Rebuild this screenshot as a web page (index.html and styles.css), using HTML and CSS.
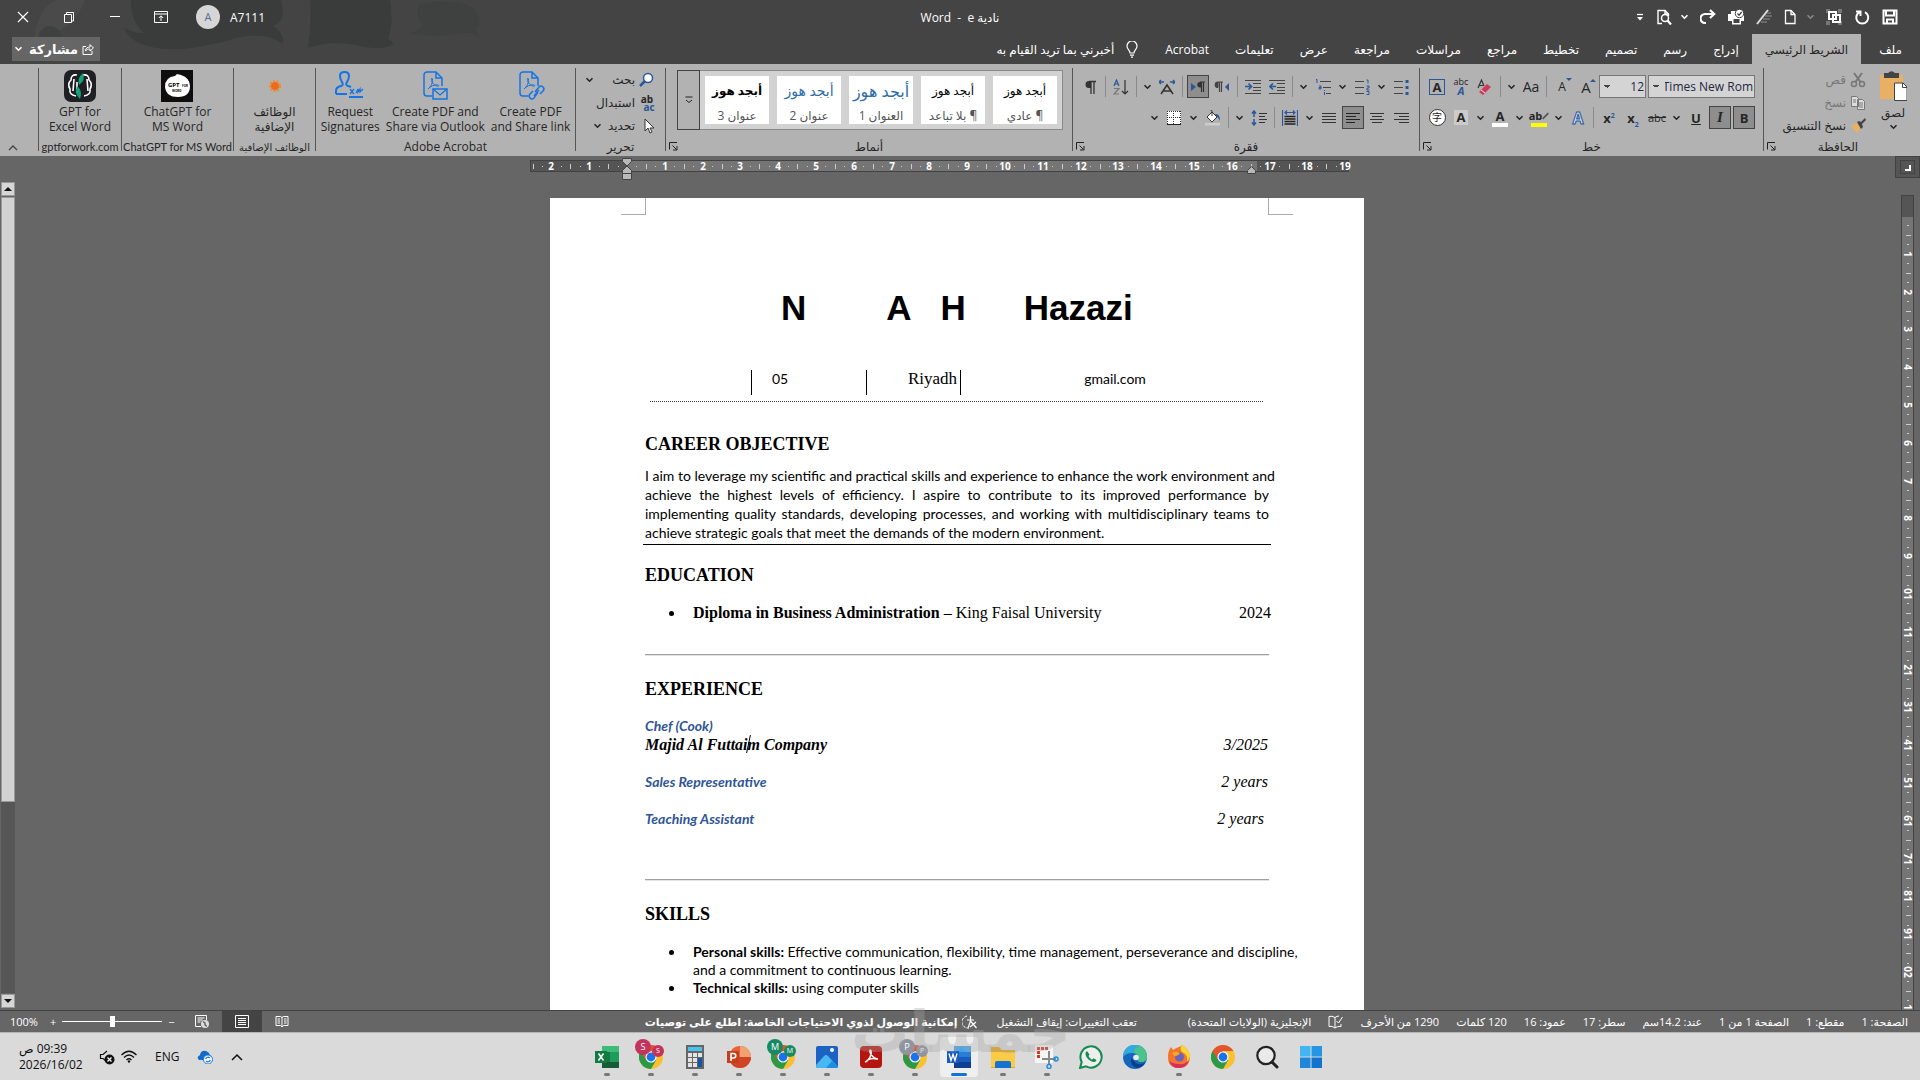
FILE: index.html
```
<!DOCTYPE html>
<html lang="ar" dir="rtl">
<head>
    <meta charset="UTF-8">
    <meta name="viewport" content="width=device-width, initial-scale=1.0">
    <title>نادية e - Word</title>
    <link rel="stylesheet" href="styles.css">
</head>
<body>
    <svg class="defs" aria-hidden="true">
        <symbol id="chev" viewBox="0 0 8 6"><path d="M1 1.2 4 4.2 7 1.2" fill="none" stroke="currentColor" stroke-width="1.6"/></symbol>
        <symbol id="launch" viewBox="0 0 9 9"><path d="M.5 7.500V.5H8M3.500 3.500 7.500 7.500M8 4v4H4" fill="none" stroke="#222"/></symbol>
        <symbol id="chrome" viewBox="0 0 24 24">
            <circle cx="12" cy="12" r="12" fill="#fbc02d"/>
            <path d="M12 12 1.600 6A12 12 0 0 0 12 24l5.200-9z" fill="#2a9a48"/>
            <path d="M1.600 6A12 12 0 0 1 22.400 6H12L6.800 15z" fill="#e2552f"/>
            <circle cx="12" cy="12" r="5.500" fill="#fff"/><circle cx="12" cy="12" r="4.400" fill="#1a73e8"/>
        </symbol>
        <symbol id="pdf" viewBox="0 0 24 28">
            <path d="M10 25H5a3 3 0 0 1-3-3V4a3 3 0 0 1 3-3h9l6 6v8M14 1v6h6" fill="none" stroke="#1473e6" stroke-width="1.500"/>
            <path d="M6 18c3-2 5-7 4.500-10-.3-1-1.300-1-1.200.3C9.600 12 13 15 16 15.200c1 0 1-1.200-.3-1.300C12 13.700 8.500 15 6 18z" fill="none" stroke="#1473e6"/>
        </symbol>
    </svg>

    <header class="top">
        <svg class="doodle" viewBox="0 0 520 64" aria-hidden="true">
            <path d="M35 30Q45 0 60 0h25q-10 30-50 40z" fill="#4a4a4a"/>
            <ellipse cx="50" cy="36" rx="11" ry="10" fill="#3f4040"/>
            <path d="M131 0h150q6 22-8 26 12 8 10 18-20-14-50-5-34 10-60 10-40 0-49-21 12 6 20 5-14-12-13-33zM310 0h80q4 24-2 38 4 4 6 6-8 6-30 3-30-8-56 1 4-24 2-48z" fill="#3a3c3c"/>
            <path d="M420 4q30-8 54 4 10 16 2 20l4 10q-8-6-18-5-26 6-52 0 10-2 12-8-8-12-2-21z" fill="#3f4040"/>
        </svg>
        <div class="titlebar">
            <div class="quick">
                <button class="qbtn" aria-label="حفظ"><svg viewBox="0 0 16 16"><path d="M1.500 1.500h13v13h-13zM4 1.500v5h8v-5M5 14.500v-4h6v4" fill="none" stroke="#fff" stroke-width="2"/></svg></button>
                <button class="qbtn" aria-label="تكرار"><svg viewBox="0 0 16 16"><path d="M5.500 3.200A6 6 0 1 0 11 3.200M2 2.500h4.500V7" fill="none" stroke="#fff" stroke-width="2"/></svg></button>
                <button class="qbtn" aria-label="تجميع"><svg viewBox="0 0 16 16"><path d="M0 0h4v4H0zM12 0h4v4h-4zM0 12h4v4H0zM12 12h4v4h-4z" fill="#777"/><path d="M3 3h7v7H3zM7 6h7v7H7z" fill="none" stroke="#fff" stroke-width="2"/></svg></button>
                <svg class="chev dim"><use href="#chev"/></svg>
                <button class="qbtn" aria-label="جديد"><svg viewBox="0 0 16 16"><path d="M3.500 1.500H9l4 4v9H3.500zM9 1.500v4h4" fill="none" stroke="#fff" stroke-width="1.300"/></svg></button>
                <button class="qbtn wide" aria-label="قلم"><svg viewBox="0 0 16 16"><path d="M1 15 12 1" stroke="#ddd" stroke-width="2"/><path d="M5 13h6M7 10h7M9 7h7M11 4h4" stroke="#777" stroke-width="1.500"/></svg></button>
                <button class="qbtn wide" aria-label="طباعة"><svg viewBox="0 0 16 16"><path d="M0 5h3V2h5v3h8v7h-3v3.500H4V12H0z" fill="#fff"/><path d="M5.500 10h6v4h-6z" fill="#444"/><circle cx="11.500" cy="4.500" r="4.200" fill="#fff" stroke="#444"/><path d="m9.500 4.500 1.500 1.700 2.700-3.200" fill="none" stroke="#444" stroke-width="1.300"/></svg></button>
                <button class="qbtn wide" aria-label="إعادة"><svg viewBox="0 0 16 16"><path d="M6 14H5A4.500 4.500 0 0 1 5 5h9M10 1l4.200 4L10 9" fill="none" stroke="#fff" stroke-width="2.200"/></svg></button>
                <svg class="chev"><use href="#chev"/></svg>
                <button class="qbtn" aria-label="معاينة"><svg viewBox="0 0 16 16"><path d="M6 14.500H2v-13h7l3.500 3.500v2M9 1.500v3.500h3" fill="none" stroke="#fff" stroke-width="1.400"/><circle cx="9" cy="9" r="3.500" fill="#444" stroke="#fff" stroke-width="1.500"/><path d="m11.500 11.500 3.500 4" stroke="#fff" stroke-width="2.200"/></svg></button>
                <button class="qbtn" aria-label="تخصيص"><svg viewBox="0 0 16 16"><path d="M5 5.500h6" stroke="#fff" stroke-width="1.300"/><path d="M5 8h6l-3 3.500z" fill="#fff"/></svg></button>
            </div>
            <div class="doc-title"><bdi>نادية</bdi> <bdi>e</bdi> &nbsp;-&nbsp; <bdi>Word</bdi></div>
            <div class="win">
                <span class="user"><span>A7111</span><span class="avatar">A</span></span>
                <button class="wbtn" aria-label="خيارات عرض الشريط"><svg viewBox="0 0 14 12"><path d="M.500.500h13v11H.500zM.500 3h13M7 10V5M4.800 7 7 4.800 9.200 7" fill="none" stroke="#fff"/></svg></button>
                <button class="wbtn" aria-label="تصغير"><svg viewBox="0 0 14 12"><path d="M2 5.500h10" stroke="#fff"/></svg></button>
                <button class="wbtn" aria-label="استعادة"><svg viewBox="0 0 14 12"><path d="M2.500 3.500h7v8h-7zM4.500 3V1.500h7V10H10" fill="none" stroke="#fff"/></svg></button>
                <button class="wbtn" aria-label="إغلاق"><svg viewBox="0 0 14 12"><path d="m2 1 10 10M12 1 2 11" stroke="#fff" stroke-width="1.200"/></svg></button>
            </div>
        </div>
        <nav class="tabs">
            <button class="tab file">ملف</button>
            <button class="tab active">الشريط الرئيسي</button>
            <button class="tab">إدراج</button>
            <button class="tab">رسم</button>
            <button class="tab">تصميم</button>
            <button class="tab">تخطيط</button>
            <button class="tab">مراجع</button>
            <button class="tab">مراسلات</button>
            <button class="tab">مراجعة</button>
            <button class="tab">عرض</button>
            <button class="tab">تعليمات</button>
            <button class="tab">Acrobat</button>
            <button class="tell"><svg viewBox="0 0 12 17"><path d="M4 12c0-3-3-3.500-3-7a5 5 0 0 1 10 0c0 3.500-3 4-3 7zM4 14.200h4M5 16.200h2" fill="none" stroke="#fff" stroke-width="1.200"/></svg>أخبرني بما تريد القيام به</button>
            <button class="share"><svg class="share-ico" viewBox="0 0 12 12"><path d="M4 3.500H1v8h9V8M3.500 8c0-3 2-4 4.500-4V1.500L11.500 5 8 8V6C6 6 4.500 6.500 3.500 8z" fill="none" stroke="#fff"/></svg>مشاركة<svg class="chev"><use href="#chev"/></svg></button>
        </nav>
    </header>

    <section class="ribbon">
        <div class="group clip">
            <div class="body">
                <button class="paste"><svg viewBox="0 0 28 30"><path d="M1 4h23v24H1z" fill="#e8b063"/><path d="M5 2h4q3.500-3.500 7 0h4v5H5z" fill="#444"/><path d="M15.500 12H24l4 4v13.500H15.500z" fill="#fff" stroke="#444"/><path d="M23.500 12v4.500H28" fill="none" stroke="#444"/></svg>لصق<svg class="chev"><use href="#chev"/></svg></button>
                <div class="stack">
                    <button class="mini off"><svg viewBox="0 0 16 16"><path d="M4 1l6.500 9M12 1 5.500 10" stroke="#777" stroke-width="2"/><circle cx="4" cy="12" r="2.500" fill="none" stroke="#777" stroke-width="1.500"/><circle cx="12" cy="12" r="2.500" fill="none" stroke="#777" stroke-width="1.500"/></svg>قص</button>
                    <button class="mini off"><svg viewBox="0 0 16 16"><path d="M1.500 1.500h5l2 2v8h-7zM7.500 4.500h5l2 2v8h-7z" fill="#ddd" stroke="#777"/><path d="M3 5h3M3 7h3M9 8h4M9 10h4M9 12h4" stroke="#777"/></svg>نسخ</button>
                    <button class="mini"><svg viewBox="0 0 16 16"><path d="m1 8 6-3 4 5-4 5z" fill="#e8b063"/><path d="m7 4 2-1 2 1 4-4 1 2-4 4 1 3-2 2z" fill="#444"/></svg>نسخ التنسيق</button>
                </div>
            </div>
            <div class="label">الحافظة</div><svg class="launch"><use href="#launch"/></svg>
        </div>

        <div class="group font">
            <div class="rows">
                <div class="row">
                    <select class="combo face" aria-label="الخط"><option>Times New Rom</option></select>
                    <select class="combo size" aria-label="حجم الخط"><option>12</option></select>
                    <button class="tool"><span class="g16">A</span><i class="tri up"></i></button>
                    <button class="tool"><span class="g13">A</span><i class="tri down"></i></button>
                    <i class="sep"></i>
                    <button class="tool"><span class="g15">Aa</span></button>
                    <svg class="chev"><use href="#chev"/></svg>
                    <i class="sep"></i>
                    <button class="tool" aria-label="مسح"><svg viewBox="0 0 16 16"><path d="M1 9 4.500 1 7 7M2.500 6.500h3.500" fill="none" stroke="#333" stroke-width="1.200"/><path d="m2 13 8-8 4 3-8 8z" fill="#cf3a5c"/><path d="m4 11 4 3" stroke="#fff" stroke-width=".8"/></svg></button>
                    <button class="tool abca"><span>abc</span><b>A</b></button>
                    <button class="tool"><span class="boxed">A</span></button>
                </div>
                <div class="row">
                    <button class="tool on"><b>B</b></button>
                    <button class="tool on"><b class="serif-i">I</b></button>
                    <button class="tool"><b class="und">U</b></button>
                    <svg class="chev"><use href="#chev"/></svg>
                    <button class="tool"><s class="g12">abc</s></button>
                    <button class="tool"><b dir="ltr">x<sub>2</sub></b></button>
                    <button class="tool"><b dir="ltr">x<sup>2</sup></b></button>
                    <i class="sep"></i>
                    <button class="tool"><span class="glow">A</span></button>
                    <svg class="chev"><use href="#chev"/></svg>
                    <button class="tool bar yellow" dir="ltr"><b class="g12">ab</b><svg class="pen" viewBox="0 0 10 10"><path d="M1 9 9 1" stroke="#555" stroke-width="2.500"/></svg></button>
                    <svg class="chev"><use href="#chev"/></svg>
                    <button class="tool bar white"><b>A</b></button>
                    <svg class="chev"><use href="#chev"/></svg>
                    <button class="tool"><b class="shade">A</b></button>
                    <button class="tool"><span class="round">字</span></button>
                </div>
            </div>
            <div class="label">خط</div><svg class="launch"><use href="#launch"/></svg>
        </div>

        <div class="group para">
            <div class="rows">
                <div class="row">
                    <button class="tool" aria-label="تعداد نقطي"><svg viewBox="0 0 16 16"><path d="M1 2.500h9M1 8.500h9M1 14.500h9" stroke="#444"/><path d="M12.500 1h3v3h-3zM12.500 7h3v3h-3zM12.500 13h3v3h-3z" fill="#2b579a"/></svg></button>
                    <svg class="chev"><use href="#chev"/></svg>
                    <button class="tool" aria-label="تعداد رقمي"><svg viewBox="0 0 16 16"><path d="M1 2.500h9M1 8.500h9M1 14.500h9" stroke="#444"/><path d="M12.500 1H14v3.500M12.500 7H15v2h-2v2h2.500M12.500 12.500H15v3h-2.500" fill="none" stroke="#2b579a"/></svg></button>
                    <svg class="chev"><use href="#chev"/></svg>
                    <button class="tool" aria-label="قائمة متعددة"><svg viewBox="0 0 16 16"><path d="M5 2.500h11M8 8.500h8M11 14.500h5" stroke="#444"/><path d="M1 .5h1V4M4 7h2v3H4V8.500h2M9.500 11v1M9.500 13v3" fill="none" stroke="#2b579a"/></svg></button>
                    <svg class="chev"><use href="#chev"/></svg>
                    <i class="sep"></i>
                    <button class="tool" aria-label="إنقاص المسافة"><svg viewBox="0 0 16 16"><path d="M0 1.500h16M8 4.500h8M8 8.500h8M8 11.500h8M0 14.500h16" stroke="#444"/><path d="M7 7.500H1M4 4.500l-3 3 3 3" fill="none" stroke="#2b579a" stroke-width="1.600"/></svg></button>
                    <button class="tool" aria-label="زيادة المسافة"><svg viewBox="0 0 16 16"><path d="M0 1.500h16M8 4.500h8M8 8.500h8M8 11.500h8M0 14.500h16" stroke="#444"/><path d="M0 7.500h6M3.500 4.500l3 3-3 3" fill="none" stroke="#2b579a" stroke-width="1.600"/></svg></button>
                    <i class="sep"></i>
                    <button class="tool" aria-label="من اليمين إلى اليسار"><svg viewBox="0 0 16 16"><path d="M9 3H4a2.500 2.500 0 0 0 0 5.500M5.500 3v10M7.500 3v10" fill="none" stroke="#444" stroke-width="1.200"/><path d="M4.500 3v5.500H4a2.700 2.700 0 0 1 0-5.500z" fill="#444"/><path d="M15 4v8l-4-4z" fill="#2b579a"/></svg></button>
                    <button class="tool on" aria-label="من اليسار إلى اليمين"><svg viewBox="0 0 16 16"><path d="M15 3h-5M11.500 3v10M13.500 3v10" fill="none" stroke="#333" stroke-width="1.200"/><path d="M11.500 3v5.500H10A2.700 2.700 0 0 1 10 3z" fill="#333"/><path d="M1 4v8l5-4z" fill="#2b579a"/></svg></button>
                    <i class="sep"></i>
                    <button class="tool" aria-label="تخطيط آسيوي"><svg viewBox="0 0 16 16"><path d="m2 15 6-9 6 9M4.500 12h7" fill="none" stroke="#333" stroke-width="1.600"/><path d="M0 3h5M2 1 0 3l2 2M11 3h5M14 1l2 2-2 2" fill="none" stroke="#2b579a" stroke-width="1.300"/></svg></button>
                    <svg class="chev"><use href="#chev"/></svg>
                    <i class="sep"></i>
                    <button class="tool" aria-label="فرز"><svg viewBox="0 0 16 16"><path d="m1 7 2.500-6L6 7M2 5h3" fill="none" stroke="#2b579a" stroke-width="1.200"/><path d="M1 9.500h5L1 15h5" fill="none" stroke="#777" stroke-width="1.200"/><path d="M12 1v14M9 12l3 3 3-3" fill="none" stroke="#333" stroke-width="1.200"/></svg></button>
                    <i class="sep"></i>
                    <button class="tool" aria-label="إظهار العلامات"><svg viewBox="0 0 16 16"><path d="M14 2.500H7M9 2v13M12 2v13" stroke="#333" stroke-width="1.300" fill="none"/><path d="M9 2v7H7a3.500 3.500 0 0 1 0-7z" fill="#333"/></svg></button>
                </div>
                <div class="row">
                    <button class="tool" aria-label="محاذاة لليمين"><svg viewBox="0 0 16 16"><path d="M1 3.500h15M6 6.500h10M1 9.500h15M6 12.500h10" stroke="#333"/></svg></button>
                    <button class="tool" aria-label="توسيط"><svg viewBox="0 0 16 16"><path d="M1 3.500h14M3 6.500h10M1 9.500h14M3 12.500h10" stroke="#333"/></svg></button>
                    <button class="tool on" aria-label="محاذاة لليسار"><svg viewBox="0 0 16 16"><path d="M1 3.500h14M1 6.500h10M1 9.500h14M1 12.500h9" stroke="#222"/></svg></button>
                    <button class="tool" aria-label="ضبط"><svg viewBox="0 0 16 16"><path d="M1 3.500h14M1 6.500h14M1 9.500h14M1 12.500h14" stroke="#333"/></svg></button>
                    <svg class="chev"><use href="#chev"/></svg>
                    <button class="tool" aria-label="توزيع"><svg viewBox="0 0 16 16"><path d="M.5 0v16M15.500 0v16M3 2.500h10M5 .5l-2 2 2 2M11 .5l2 2-2 2" fill="none" stroke="#2b579a" stroke-width="1.200"/><path d="M2.500 6.500h11M2.500 9h11M2.500 11.500h11M2.500 14h11" stroke="#222" stroke-width="1.300"/></svg></button>
                    <i class="sep"></i>
                    <button class="tool" aria-label="تباعد الأسطر"><svg viewBox="0 0 16 16"><path d="M8 3.500h8M8 6.500h6M8 9.500h8M8 12.500h6" stroke="#333"/><path d="M3 1v6M3 9v6M1 3.500 3 1l2 2.500M1 12.500 3 15l2-2.500" fill="none" stroke="#2b579a" stroke-width="1.500"/></svg></button>
                    <svg class="chev"><use href="#chev"/></svg>
                    <i class="sep"></i>
                    <button class="tool" aria-label="تظليل"><svg viewBox="0 0 16 16"><path d="m2 7 5-5 5 5-5 5z" fill="#fff" stroke="#333"/><path d="M7 6V1.500Q7 0 5.500 0" fill="none" stroke="#333"/><path d="M10 4q5-1 5 7-2-4-3-4z" fill="#2b579a"/><path d="M0 13h15v2.500H0z" fill="#ccc"/></svg></button>
                    <svg class="chev"><use href="#chev"/></svg>
                    <button class="tool" aria-label="حدود"><svg viewBox="0 0 16 16"><path d="M1 1h14v14H1z" fill="#fff"/><path d="M1 1.500h14M1 7.500h14M1.500 1v14M7.500 1v14M14.500 1v14" stroke="#333" stroke-dasharray="1 1"/><path d="M1 14.500h14" stroke="#222"/></svg></button>
                    <svg class="chev"><use href="#chev"/></svg>
                </div>
            </div>
            <div class="label">فقرة</div><svg class="launch"><use href="#launch"/></svg>
        </div>

        <div class="group styles">
            <div class="gallery">
                <button class="style"><span class="sample">أبجد هوز</span><span>¶ عادي</span></button>
                <button class="style"><span class="sample">أبجد هوز</span><span>¶ بلا تباعد</span></button>
                <button class="style"><span class="sample big">أبجد هوز</span><span>العنوان 1</span></button>
                <button class="style"><span class="sample blue">أبجد هوز</span><span>عنوان 2</span></button>
                <button class="style"><span class="sample bold">أبجد هوز</span><span>عنوان 3</span></button>
                <button class="more" aria-label="المزيد"><svg viewBox="0 0 8 8"><path d="M.500 1h7M1 4l3 2.500L7 4" fill="none" stroke="#222"/></svg></button>
            </div>
            <div class="label">أنماط</div><svg class="launch"><use href="#launch"/></svg>
        </div>

        <div class="group edit">
            <div class="stack">
                <button class="mini"><svg viewBox="0 0 16 16"><circle cx="9" cy="6" r="4.500" fill="#fff" stroke="#2b579a" stroke-width="1.500"/><path d="m6 9-5 5" stroke="#2b579a" stroke-width="2.500"/></svg>بحث<svg class="chev far"><use href="#chev"/></svg></button>
                <button class="mini"><span class="abac" dir="ltr"><span>ab</span><span>ac</span></span>استبدال</button>
                <button class="mini"><svg viewBox="0 0 16 16"><path d="M6 1v12l3-3 2 5 2-1-2-4h4z" fill="#fff" stroke="#333"/></svg>تحديد<svg class="chev"><use href="#chev"/></svg></button>
            </div>
            <div class="label">تحرير</div>
        </div>

        <div class="group adobe" dir="ltr">
            <div class="body">
                <button class="large"><svg viewBox="0 0 32 32"><path d="M2 24v-3q0-4 5-5 3-1 1-4-2-3-2-6 0-4 4.500-4T15 6q0 3-2 6-2 3 1 4 2 .5 3 1M2 24h11M15 27h14" fill="none" stroke="#1473e6" stroke-width="2"/><path d="m16 19 4 5M20 19l-4 5M22 23l2-4v3l2-3v3l3-3" fill="none" stroke="#1473e6" stroke-width="1.300"/></svg>Request<br>Signatures</button>
                <button class="large"><svg viewBox="0 0 32 32"><use href="#pdf" x="3" y="1" width="24" height="28"/><path d="M14 19h14v10H14z" fill="#b2b2b2" stroke="#1473e6" stroke-width="1.500"/><path d="m14 19 7 6 7-6" fill="none" stroke="#1473e6" stroke-width="1.300"/></svg>Create PDF and<br>Share via Outlook</button>
                <button class="large"><svg viewBox="0 0 32 32"><use href="#pdf" x="3" y="1" width="24" height="28"/><path d="m20 22 4-5q2-2 4 0t0 4l-3 3M23 22l-4 6q-2 2-4 0t0-4l3-3M19 26l5-6" fill="none" stroke="#1473e6" stroke-width="1.500"/></svg>Create PDF<br>and Share link</button>
            </div>
            <div class="label">Adobe Acrobat</div>
        </div>

        <div class="group addin">
            <div class="body"><button class="large"><svg viewBox="0 0 32 32"><circle cx="16" cy="16" r="4" fill="#ee6a1f"/><circle cx="16" cy="16" r="5" fill="none" stroke="#f08a22" stroke-width="2" stroke-dasharray="2 1.500"/></svg>الوظائف<br>الإضافية</button></div>
            <div class="label">الوظائف الإضافية</div>
        </div>

        <div class="group chatgpt" dir="ltr">
            <div class="body"><button class="large"><svg viewBox="0 0 32 32"><path d="M0 0h32v32H0z" fill="#0e0e0e"/><path d="M16 4l4 1q9 3 9 11 0 11-12 11T4 17Q4 7 14 6z" fill="#fff"/><text x="7" y="17" class="logo-text">GPT</text><text x="21" y="17" class="logo-tiny">FOR</text><text x="11" y="22" class="logo-tiny">WORD</text></svg>ChatGPT for<br>MS Word</button></div>
            <div class="label">ChatGPT for MS Word</div>
        </div>

        <div class="group gptfor" dir="ltr">
            <div class="body"><button class="large"><svg viewBox="0 0 32 32"><rect width="32" height="32" rx="7" fill="#1f2024"/><path d="M13 5Q7 4 7 10q-4 4-1 9-1 6 6 7M19 5q6-1 6 5 4 4 1 9 1 6-6 7M10 9l-1 12M23 9l1 12M13 12v11" fill="none" stroke="#fff" stroke-width="1.600"/><path d="M19 3q3 7-4 12-2-7 4-12zM13 16q6 4 3 13-6-5-3-13z" fill="#12a37a"/></svg>GPT for<br>Excel Word</button></div>
            <div class="label">gptforwork.com</div>
        </div>
        <button class="collapse" aria-label="طي الشريط"><svg viewBox="0 0 10 6"><path d="m1 5 4-4 4 4" fill="none" stroke="#444" stroke-width="1.300"/></svg></button>
    </section>

    <main class="work" dir="ltr">
        <div class="scroll">
            <button aria-label="up"><svg viewBox="0 0 8 8"><path d="M0 6h8L4 2z" fill="#111"/></svg></button>
            <div class="track"><div class="thumb"></div></div>
            <button aria-label="down"><svg viewBox="0 0 8 8"><path d="M0 2h8L4 6z" fill="#111"/></svg></button>
        </div>

        <div class="canvas">
            <svg class="hruler" id="hruler" width="830" height="24"></svg>
            <article class="page">
                <div class="marks"><i></i><i></i></div>
                <h1><span>N</span><span>A</span><span>H</span><span>Hazazi</span></h1>
                <div class="contact">
                    <span class="c-blank"></span><span class="c-phone">05</span><span class="c-city">Riyadh</span><span class="c-mail">gmail.com</span>
                </div>
                <h2 class="first">CAREER OBJECTIVE</h2>
                <p class="objective">
                    <span>I aim to leverage my scientific and practical skills and experience to enhance the work environment and</span>
                    <span>achieve the highest levels of efficiency. I aspire to contribute to its improved performance by</span>
                    <span>implementing quality standards, developing processes, and working with multidisciplinary teams to</span>
                    <span>achieve strategic goals that meet the demands of the modern environment.</span>
                </p>
                <hr class="solid">
                <h2>EDUCATION</h2>
                <ul class="edu"><li><span><b>Diploma in Business Administration</b> – King Faisal University</span><span>2024</span></li></ul>
                <hr>
                <h2>EXPERIENCE</h2>
                <p class="job"><span class="role">Chef (Cook)</span></p>
                <p class="job second"><span class="firm">Majid Al Futtai<i class="caret"></i>m Company</span><span>3/2025</span></p>
                <p class="job"><span class="role">Sales Representative</span><span>2 years</span></p>
                <p class="job"><span class="role">Teaching Assistant</span><span class="last">2 years</span></p>
                <hr class="low">
                <h2>SKILLS</h2>
                <ul class="skills">
                    <li><b>Personal skills:</b> Effective communication, flexibility, time management, perseverance and discipline, and a commitment to continuous learning.</li>
                    <li><b>Technical skills:</b> using computer skills</li>
                </ul>
            </article>
        </div>

        <div class="side">
            <div class="corner"><span><i></i></span></div>
            <svg class="vruler" id="vruler" width="13" height="815"></svg>
        </div>
    </main>

    <footer class="status">
        <span>الصفحة: 1</span>
        <span>مقطع: 1</span>
        <span>الصفحة 1 من 1</span>
        <span>عند: 14.2سم</span>
        <span>سطر: 17</span>
        <span>عمود: 16</span>
        <span>120 كلمات</span>
        <span>1290 من الأحرف</span>
        <svg class="s-ico" viewBox="0 0 15 14"><path d="M7 2.500V13M7 2.500Q4 .5 1 1.500v10q3-1 6 1.500 2-2 6-1.500V9M7 2.500q2-1.500 4-1.500M8.500 6l2 2 4-6" fill="none" stroke="#fff"/></svg>
        <span>الإنجليزية (الولايات المتحدة)</span>
        <span class="track-ch">تعقب التغييرات: إيقاف التشغيل</span>
        <span class="access"><svg class="s-ico" viewBox="0 0 15 14"><path d="M5 1a6 6 0 0 0 2 12" fill="none" stroke="#fff" stroke-dasharray="3 1"/><path d="M5 5h7M8.500 1v5L6 13M8.500 6l6 7M14 7l-6 5" fill="none" stroke="#fff" stroke-width="1.200"/></svg>إمكانية الوصول لذوي الاحتياجات الخاصة: اطلع على توصيات</span>
        <span class="right-end">
            <span class="views">
                <button aria-label="وضع القراءة"><svg viewBox="0 0 14 13"><path d="M7 2v10M1 1.500h4.500L7 2.500l1.500-1H13v9H8.500L7 12l-1.500-1.500H1zM2.500 4H5M2.500 6H5M2.500 8H5M9 4h2.500M9 6h2.500M9 8h2.500" fill="none" stroke="#fff"/></svg></button>
                <button class="cur" aria-label="تخطيط الطباعة"><svg viewBox="0 0 14 13"><path d="M.5.5h13v12H.5zM3 3.500h8M3 5.500h8M3 7.500h8M3 9.500h8" fill="none" stroke="#fff"/></svg></button>
                <button aria-label="تخطيط ويب"><svg viewBox="0 0 14 13"><path d="M6 11.500H.500V.500h11V5M2.500 3h7M2.500 5h5M2.500 7h3" fill="none" stroke="#fff"/><circle cx="10" cy="9" r="4" fill="#ddd"/><path d="M8 7q2 0 2 2t2 2" stroke="#666" fill="none" stroke-width="1.500"/></svg></button>
            </span>
            <span class="zoom" dir="ltr"><label for="zoom">100%</label><span>+</span><input type="range" id="zoom" min="0" max="100" value="50"><span>−</span></span>
        </span>
    </footer>

    <footer class="taskbar" dir="ltr">
        <div class="tray">
            <div class="clock"><span dir="rtl">09:39 ص</span><span>2026/16/02</span></div>
            <svg class="t-snd" viewBox="0 0 16 16"><path d="M8 2 4 5.500H1.500v4H4L7 12" fill="none" stroke="#111" stroke-width="1.200"/><circle cx="10.500" cy="10.500" r="5" fill="#111"/><path d="m8.500 8.500 4 4M12.500 8.500l-4 4" stroke="#fff" stroke-width="1.200"/></svg>
            <svg class="t-wifi" viewBox="0 0 16 13"><path d="M.5 5Q8-2.500 15.500 5M3 7.500q5-5 10 0M5.500 10q2.500-2.500 5 0" fill="none" stroke="#111" stroke-width="1.300"/><circle cx="8" cy="11.500" r="1.200" fill="#111"/></svg>
            <span class="lang">ENG</span>
            <svg class="t-drive" viewBox="0 0 16 14"><path d="M2 10q-3-3 1-5 1-5 6-4 3 1 4 4 3 1 2 5z" fill="#1569c7"/><circle cx="11" cy="9.500" r="4.500" fill="#fff" stroke="#1473e6"/><path d="M8.800 9a2.300 2.300 0 0 1 4-1M13.200 10a2.300 2.300 0 0 1-4 1" fill="none" stroke="#1473e6" stroke-width="1.200"/></svg>
            <svg class="t-up" viewBox="0 0 12 8"><path d="m1 7 5-5 5 5" fill="none" stroke="#111" stroke-width="1.500"/></svg>
        </div>
        <div class="apps">
            <button class="app run" aria-label="Excel"><svg viewBox="0 0 24 24"><path d="M7 1h17v22H7z" fill="#1f9b5c"/><path d="M7 1h17v6H7z" fill="#3dbb77"/><path d="M7 17h17v6H7z" fill="#185c37"/><path d="M7 7h8v10H7z" fill="#137a42"/><rect y="6" width="12" height="12" fill="#107c41"/><path d="m3.500 8.500 5 7M8.500 8.500l-5 7" stroke="#fff" stroke-width="1.600"/></svg></button>
            <button class="app run" aria-label="Chrome S"><svg viewBox="0 0 24 24"><use href="#chrome"/></svg><span class="badge pink">S</span><span class="badge small pink">S</span></button>
            <button class="app run" aria-label="Calculator"><svg viewBox="0 0 24 24"><path d="M3 0h18v24H3z" fill="#666"/><path d="M5 2h14v4H5z" fill="#4cc2f1"/><path d="M5 8h4v4H5zM10 8h4v4h-4zM15 8h4v4h-4zM5 13h4v4H5zM10 13h4v4h-4zM5 18h4v4H5zM10 18h4v4h-4z" fill="#e4e4e4"/><path d="M15 13h4v9h-4z" fill="#1256a8"/></svg></button>
            <button class="app run" aria-label="PowerPoint"><svg viewBox="0 0 24 24"><circle cx="13" cy="12" r="11" fill="#e8613c"/><path d="M13 1a11 11 0 0 1 11 11H13z" fill="#f2a26f"/><path d="M2 12h22a11 11 0 0 1-22 0z" fill="#d04424"/><rect y="6" width="12" height="12" fill="#c43e1c"/><path d="M4 16V8.500h2.500a2 2 0 0 1 0 4.500H4" fill="none" stroke="#fff" stroke-width="1.600"/></svg></button>
            <button class="app run" aria-label="Chrome M"><svg viewBox="0 0 24 24"><use href="#chrome"/></svg><span class="badge green">M</span><span class="badge small green">M</span></button>
            <button class="app run" aria-label="Photos"><svg viewBox="0 0 24 24"><rect x="1" y="1" width="22" height="22" rx="2" fill="#1b62c4"/><path d="m1 20 8-9q2-2 4 0l10 11-1 1H3q-2 0-2-3z" fill="#48b8f0"/><path d="m11 23 6-7 6 6-1 1z" fill="#1d8fe0"/><circle cx="17" cy="5" r="2" fill="#fff"/></svg></button>
            <button class="app run" aria-label="Acrobat"><svg viewBox="0 0 24 24"><rect x="1" y="1" width="22" height="22" rx="4" fill="#b5150f"/><path d="M6 17c4-1 7-7 6-11-.4-1.500-1.500-1-1 1 1 4 5 7 8 7M6.500 17C9 14 14 13 18 14" fill="none" stroke="#fff" stroke-width="1.600"/></svg></button>
            <button class="app run" aria-label="Chrome P"><svg viewBox="0 0 24 24"><use href="#chrome"/></svg><span class="badge gray">P</span><span class="badge small gray">P</span></button>
            <button class="app run now" aria-label="Word"><svg viewBox="0 0 24 24"><path d="M7 1h17v22H7z" fill="#2b7cd3"/><path d="M7 1h17v6H7z" fill="#41a5ee"/><path d="M7 12h17v6H7z" fill="#185abd"/><path d="M7 17h17v6H7z" fill="#103f91"/><rect y="6" width="12" height="12" fill="#185abd"/><path d="m2 8.500 2 7 2-6 2 6 2-7" fill="none" stroke="#fff" stroke-width="1.400"/></svg></button>
            <button class="app run" aria-label="Explorer"><svg viewBox="0 0 24 24"><path d="M0 2h8l3 3h13v18H0z" fill="#e8a51c"/><path d="M0 7h24v15H0z" fill="#fccb45"/><path d="M4 23v-5q0-2 2-2h12q2 0 2 2v5z" fill="#1473d0"/></svg></button>
            <button class="app run" aria-label="Snipping Tool"><svg viewBox="0 0 24 24"><path d="M0 0h18v18H0z" fill="#f6f6f6"/><path d="M2 2h3v3H2zM6 2h3v3H6zM10 2h3v3h-3zM2 6h3v3H2zM2 10h3v3H2z" fill="#d8331d"/><path d="M7 14h14M14 6v14" stroke="#888" stroke-width="2"/><circle cx="21" cy="14" r="2" fill="none" stroke="#1e8fe0" stroke-width="1.500"/><circle cx="14" cy="21.500" r="2" fill="none" stroke="#1e8fe0" stroke-width="1.500"/></svg></button>
            <button class="app" aria-label="WhatsApp"><svg viewBox="0 0 24 24"><path d="m1 23 1.700-6A10.600 10.600 0 1 1 7 21.300z" fill="#eee" stroke="#128c4e" stroke-width="2"/><path d="M8 6q-2 1-1.500 3.500Q8 15 14 17q3 .5 3.500-2l-3-1.700-1.500 1.400Q10.500 13.500 9.500 11l1-1.500z" fill="#128c4e"/></svg></button>
            <button class="app" aria-label="Edge"><svg viewBox="0 0 24 24"><circle cx="12" cy="12" r="12" fill="#1368bd"/><path d="M0 12A12 12 0 0 1 24 11q0 6-6 6-4 0-3-3 1-6-6-6-6 0-9 4z" fill="#35a8dc"/><path d="M12 0a12 12 0 0 1 12 11q0 6-6 6-4 0-3-3 1-5-4-6 0-5 5-6z" fill="#4cc38a"/><path d="M8 13q-1 8 6 10 6-1 8-5-8 3-11-2z" fill="#0c3f8a"/><circle cx="13" cy="12.500" r="2.800" fill="#e6eef5"/></svg></button>
            <button class="app run" aria-label="Firefox"><svg viewBox="0 0 24 24"><path d="M12 2q3-1 3-2 7 4 8 11 0 12-11 12T1 12Q1 6 4 2l2 3q3-2 6-3z" fill="#f4742b"/><path d="M15 0q7 4 8 11-1 4-3 6 1-8-5-10-3-3 0-7z" fill="#fdd835"/><path d="M2 16q3 8 11 7 7-1 9-8-4 5-10 4-6 0-10-3z" fill="#d42e5f"/><circle cx="12.500" cy="12" r="4.500" fill="#6a64c0"/><path d="M5 8q5-3 8 1l-4 2q-2 1-4-3z" fill="#f9a825"/></svg></button>
            <button class="app" aria-label="Chrome"><svg viewBox="0 0 24 24"><use href="#chrome"/></svg></button>
            <button class="app" aria-label="Search"><svg viewBox="0 0 24 24"><circle cx="11" cy="10.500" r="8.700" fill="#eaeaea" stroke="#222" stroke-width="2.200"/><path d="m17 17 5 5" stroke="#222" stroke-width="3" stroke-linecap="round"/></svg></button>
            <button class="app" aria-label="Start"><svg viewBox="0 0 24 24"><path d="M1 1h10.500v10.500H1z" fill="#41b6f2"/><path d="M12.500 1H23v10.500H12.500z" fill="#2596e2"/><path d="M1 12.500h10.500V23H1z" fill="#1f86d8"/><path d="M12.500 12.500H23V23H12.500z" fill="#1273ce"/></svg></button>
        </div>
    </footer>
    <div class="watermark">خمسات</div>

    <script>
        const NS = 'http://www.w3.org/2000/svg';
        const UNIT = 37.8;

        function add(parent, name, attrs, text) {
            const el = document.createElementNS(NS, name);
            for (const key in attrs) el.setAttribute(key, attrs[key]);
            if (text) el.textContent = text;
            parent.appendChild(el);
        }

        // horizontal ruler, zero sits on the left margin
        const h = document.getElementById('hruler');
        const zero = 97;
        add(h, 'rect', { x: 0.5, y: 4.5, width: 818, height: 11, class: 'r-out' });
        add(h, 'rect', { x: zero, y: 5, width: 630, height: 10, class: 'r-in' });
        for (let q = -10; q <= 76; q++) {
            const x = Math.round(zero + q * UNIT / 4);
            if (q === 0) continue;
            if (q % 4 === 0) {
                add(h, 'text', { x: x, y: 14, class: 'r-num' }, String(Math.abs(q / 4)));
            } else {
                const half = q % 2 === 0;
                add(h, 'rect', { x: x, y: half ? 8 : 10, width: 1, height: half ? 5 : 1, class: 'r-tick' });
            }
        }
        add(h, 'path', { d: 'M92.5 2.500h9v3L97 10l4.500 4.500v9h-9v-9L97 10l-4.500-4.500zM92.500 17.500h9', class: 'r-mark' });
        add(h, 'path', { d: 'M717.500 17.500v-3l4-4 4 4v3z', class: 'r-mark' });

        // vertical ruler, digits run right to left
        const v = document.getElementById('vruler');
        add(v, 'rect', { x: 0.5, y: 0.5, width: 12, height: 820, class: 'r-out' });
        add(v, 'rect', { x: 1, y: 22, width: 11, height: 800, class: 'r-in' });
        for (let q = 1; q <= 84; q++) {
            const y = Math.round(21 + q * UNIT / 4);
            if (q % 4 === 0) {
                const digits = String(q / 4).split('').reverse().join('');
                add(v, 'text', { transform: `translate(3 ${y}) rotate(90)`, class: 'r-num' }, digits);
            } else {
                const half = q % 2 === 0;
                add(v, 'rect', { x: half ? 5 : 6, y: y, width: half ? 5 : 2, height: 1, class: 'r-tick' });
            }
        }
    </script>
</body>
</html>
```
FILE: styles.css
```
* {
    box-sizing: border-box;
}

body {
    margin: 0;
    height: 100vh;
    display: flex;
    flex-direction: column;
    overflow: hidden;
    background: #666;
    font-family: "Open Sans", "DejaVu Sans", sans-serif;
    font-size: 12px;
    color: #262626;
}

button {
    margin: 0;
    padding: 0;
    border: 0;
    background: none;
    color: inherit;
    font: inherit;
}

svg {
    display: block;
    flex: none;
}

.defs {
    position: absolute;
    width: 0;
    height: 0;
}

.chev {
    width: 13px;
    height: 6px;
}

/* title bar and tabs */
.top {
    position: relative;
    background: #444;
    color: #fff;
}

.doodle {
    position: absolute;
    left: 0;
    top: 0;
    width: 520px;
    height: 64px;
}

.titlebar {
    position: relative;
    display: grid;
    grid-template-columns: 1fr auto 1fr;
    align-items: center;
    height: 34px;
}

.quick {
    display: flex;
    align-items: center;
    padding-right: 19px;
    gap: 5px;
}

.qbtn {
    width: 19px;
    display: flex;
    justify-content: center;
}

.qbtn.wide {
    width: 23px;
}

.qbtn svg {
    width: 16px;
    height: 16px;
}

.quick .qbtn:nth-child(-n+3) {
    width: 23px;
}

.dim {
    color: #888;
}

.win {
    display: flex;
    justify-content: flex-end;
    align-items: center;
}

.user {
    display: flex;
    align-items: center;
    gap: 10px;
    padding-left: 12px;
}

.avatar {
    width: 24px;
    height: 24px;
    border-radius: 50%;
    background: #d6d6d6;
    color: #5a6a90;
    text-align: center;
    line-height: 24px;
    font-size: 11px;
}

.wbtn {
    width: 46px;
    height: 34px;
    display: flex;
    align-items: center;
    justify-content: center;
}

.wbtn svg {
    width: 14px;
    height: 12px;
}

.tabs {
    position: relative;
    display: flex;
    height: 30px;
    padding: 0 4px 0 12px;
}

.tab {
    padding: 0 13px;
}

.file {
    padding: 0 14px 0 18px;
}

.tab.active {
    background: #b2b2b2;
    color: #262626;
}

.tell {
    display: flex;
    align-items: center;
    gap: 12px;
    padding: 0 14px;
}

.tell svg {
    width: 12px;
    height: 17px;
}

.share {
    display: flex;
    align-items: center;
    gap: 4px;
    height: 24px;
    margin: 3px auto 0 0;
    padding: 0 6px 0 0;
    background: #666;
    font-size: 13px;
    font-weight: bold;
}

.share-ico {
    width: 12px;
    height: 12px;
}

/* ribbon */
.ribbon {
    display: flex;
    height: 92px;
    background: #b2b2b2;
    padding: 4px 0 5px;
}

.group {
    position: relative;
    display: flex;
    flex-direction: column;
    justify-content: space-between;
    border-left: 1px solid #555;
}

.clip { width: 157px; }
.font { width: 344px; }
.para { width: 347px; }
.styles { flex: 1; }
.edit { width: 90px; }
.adobe { width: 260px; }
.addin { width: 82px; }
.chatgpt { width: 112px; }
.gptfor { width: 83px; }

.label {
    height: 16px;
    margin-bottom: -4px;
    line-height: 16px;
    text-align: center;
    white-space: nowrap;
}

.clip .label {
    padding-right: 8px;
}

.addin .label {
    font-size: 10px;
}

.chatgpt .label, .gptfor .label {
    font-family: Lato, sans-serif;
    font-size: 11px;
}

.launch {
    position: absolute;
    left: 3px;
    bottom: 0;
    width: 9px;
    height: 9px;
}

.body {
    display: flex;
    justify-content: center;
}

.clip .body {
    justify-content: flex-start;
    padding-right: 12px;
    gap: 12px;
}

.paste {
    width: 30px;
    display: flex;
    flex-direction: column;
    align-items: center;
    gap: 4px;
    padding-top: 3px;
    line-height: 15px;
}

.paste > svg:first-child {
    width: 28px;
    height: 30px;
}

.stack {
    display: flex;
    flex-direction: column;
}

.mini {
    display: flex;
    align-items: center;
    gap: 4px;
    height: 23px;
}

.mini > svg:first-child {
    width: 16px;
    height: 16px;
}

.off {
    color: #777;
}

.edit .stack {
    padding-right: 10px;
}

.far {
    margin-right: 12px;
}

.abac {
    display: flex;
    flex-direction: column;
    width: 16px;
    font-size: 10px;
    font-weight: bold;
    line-height: 8px;
}

.abac span + span {
    padding-left: 4px;
    color: #2b579a;
}

.rows {
    display: flex;
    flex-direction: column;
    gap: 8px;
    padding: 7px 8px 0 0;
}

.para .rows {
    padding-right: 7px;
}

.row {
    display: flex;
    align-items: center;
    gap: 2px;
    height: 23px;
}

.tool {
    position: relative;
    width: 22px;
    height: 23px;
    display: flex;
    align-items: center;
    justify-content: center;
    font-size: 13px;
}

.tool svg {
    width: 16px;
    height: 16px;
}

.tool.on {
    background: #8e8e8e;
    border: 1px solid #444;
}

.sep {
    width: 5px;
    height: 21px;
    border-left: 2px solid transparent;
    border-right: 2px solid transparent;
    background: #8a8a8a;
    background-clip: padding-box;
}

.combo {
    appearance: none;
    height: 23px;
    margin: 0;
    padding: 0 1px 0 16px;
    border: 1px solid #777;
    border-radius: 0;
    background-color: #d4d4d4;
    background-image: linear-gradient(45deg, transparent 50%, #444 50%), linear-gradient(-45deg, transparent 50%, #444 50%);
    background-repeat: no-repeat;
    background-position: 4px 9px, 7px 9px;
    background-size: 3px 3px;
    color: #262640;
    font-family: "Open Sans", sans-serif;
    font-size: 12px;
}

.face { width: 107px; }
.size { width: 47px; }

.g16 { font-size: 15px; }
.g15 { font-size: 14px; }
.g13 { font-size: 12px; }
.g12 { font-size: 11px; }

.tri {
    position: absolute;
    top: 3px;
    right: 1px;
    border: 3px solid transparent;
}

.up {
    top: 1px;
    border-bottom-color: #2b579a;
}

.down {
    border-top-color: #2b579a;
}

.abca {
    flex-direction: column;
    font-size: 9px;
    line-height: 8px;
}

.abca b {
    color: #2b579a;
    font-size: 11px;
    font-style: italic;
    line-height: 9px;
}

.boxed {
    width: 16px;
    height: 16px;
    border: 1px solid #2b579a;
    line-height: 14px;
    text-align: center;
    font-weight: bold;
}

.serif-i {
    font-family: "Liberation Serif", serif;
    font-style: italic;
    font-size: 15px;
}

.und {
    text-decoration: underline;
}

sub, sup {
    font-size: 7px;
    line-height: 0;
    color: #2b579a;
}

.glow {
    color: #dbe6f5;
    font-size: 16px;
    font-weight: bold;
    -webkit-text-stroke: 1px #2b579a;
}

.bar {
    border-bottom: 4px solid;
    width: 16px;
    height: 19px;
    margin: 0 3px;
}

.yellow { border-color: #ff0; }
.white { border-color: #fff; }

.tool .pen {
    width: 7px;
    height: 10px;
}

.shade {
    width: 14px;
    background: #cbcbcb;
    text-align: center;
    line-height: 15px;
}

.round {
    width: 17px;
    height: 17px;
    border: 1px solid #333;
    border-radius: 50%;
    background: #fff;
    font-family: "Noto Sans CJK JP", sans-serif;
    font-size: 10px;
    line-height: 14px;
    text-align: center;
}

.gallery {
    display: flex;
    gap: 8px;
    height: 60px;
    margin: 2px 9px 0 11px;
    padding: 5px 5px 5px 0;
    border: 1px solid #8a8a8a;
    background: #d2d2d2;
}

.style {
    flex: 1;
    display: flex;
    flex-direction: column;
    justify-content: space-between;
    align-items: center;
    background: #fff;
    color: #555;
    overflow: hidden;
    line-height: 17px;
    white-space: nowrap;
}

.sample {
    height: 28px;
    line-height: 30px;
    color: #000;
    font-size: 12px;
}

.sample.blue, .sample.big {
    color: #2e6da8;
}

.sample.blue {
    font-size: 14px;
}

.sample.big {
    font-size: 16px;
}

.sample.bold {
    font-weight: bold;
}

.more {
    width: 23px;
    margin: -6px -3px -6px -1px;
    border: 1px solid #444;
    background: #b2b2b2;
    display: flex;
    align-items: center;
    justify-content: center;
}

.more svg {
    width: 8px;
    height: 8px;
}

.large {
    display: block;
    padding: 2px 3px 0;
    line-height: 15px;
    white-space: nowrap;
}

.large svg {
    width: 32px;
    height: 32px;
    margin: 0 auto 2px;
}

.logo-text {
    font-size: 6px;
    font-weight: bold;
}

.logo-tiny {
    font-size: 3px;
    font-weight: bold;
}

.collapse {
    width: 38px;
    display: flex;
    align-items: flex-end;
    justify-content: center;
    padding-right: 13px;
}

.collapse svg {
    width: 10px;
    height: 6px;
}

/* workspace */
.work {
    flex: 1;
    min-height: 0;
    display: flex;
}

.scroll {
    width: 16px;
    display: flex;
    flex-direction: column;
    gap: 1px;
    padding: 26px 1px 2px;
}

.scroll button {
    height: 14px;
    display: flex;
    align-items: center;
    justify-content: center;
    background: #d6d6d6;
    border: 1px solid #999;
}

.scroll button svg {
    width: 8px;
    height: 8px;
}

.track {
    flex: 1;
    background: #565656;
}

.thumb {
    height: 76%;
    background: #d2d2d2;
    border: 1px solid #999;
}

.canvas {
    flex: 1;
    display: flex;
    flex-direction: column;
    align-items: center;
    overflow: hidden;
}

.hruler {
    margin: 0 25px 18px 0;
}

.r-out { fill: #555; stroke: #424242; }
.r-in { fill: #757575; }
.r-tick { fill: #ccc; }
.r-mark { fill: #b8b8b8; stroke: #444; }

.r-num {
    fill: #fff;
    font-family: "Open Sans", sans-serif;
    font-size: 10px;
    font-weight: bold;
    text-anchor: middle;
}

.page {
    flex: none;
    width: 814px;
    height: 900px;
    padding: 0 95px;
    background: #fff;
    color: #000;
    font-family: "Liberation Serif", serif;
    font-size: 16px;
}

.marks {
    display: flex;
    justify-content: space-between;
    margin: 0 -24px;
}

.marks i {
    width: 25px;
    height: 17px;
    border-bottom: 1px solid #aaa;
    border-right: 1px solid #aaa;
}

.marks i + i {
    border-right: 0;
    border-left: 1px solid #aaa;
}

h1 {
    display: flex;
    margin: 72px 0 42px 136px;
    font-family: "Liberation Sans", sans-serif;
    font-size: 35px;
    line-height: 41px;
}

h1 span:nth-child(2) { margin-left: 80px; }
h1 span:nth-child(3) { margin-left: 29px; }
h1 span:nth-child(4) { margin-left: 58px; }

.contact {
    display: flex;
    height: 32px;
    margin: 0 6px 32px 5px;
    border-bottom: 1px dotted #333;
    line-height: 18px;
}

.contact span {
    height: 25px;
    border-right: 1px solid #000;
}

.c-blank {
    width: 102px;
}

.c-phone, .c-mail {
    font-family: Lato, sans-serif;
    font-size: 14px;
}

.c-phone {
    width: 115px;
    padding-left: 20px;
}

.c-city {
    width: 94px;
    padding-right: 3px;
    text-align: right;
    font-size: 17px;
}

.contact .c-mail {
    flex: 1;
    border: 0;
    text-align: center;
    padding-left: 6px;
}

h2 {
    margin: 23px 0 16px;
    font-size: 18px;
    line-height: 21px;
}

h2.first {
    margin: 0 0 11px;
}

p {
    margin: 0;
}

.objective {
    font-family: Lato, sans-serif;
    font-size: 14px;
    line-height: 19px;
}

.objective span {
    display: block;
    text-align-last: justify;
    white-space: nowrap;
}

.objective span:last-child {
    text-align-last: left;
}

hr {
    height: 2px;
    margin: 32px 0 0;
    border: 0;
    border-top: 1px solid #a0a0a0;
    border-bottom: 1px solid #e3e3e3;
}

hr.solid {
    height: 1px;
    margin: 2px -2px 0;
    border: 0;
    background: #000;
}

hr.solid + h2 {
    margin-top: 20px;
}

hr.low {
    margin-top: 51px;
}

ul {
    margin: 0;
    padding: 2px 0 0 40px;
}

li {
    padding-left: 8px;
}

.edu {
    margin-right: -2px;
    line-height: 18px;
}

.edu li span + span {
    float: right;
}

.job {
    display: flex;
    justify-content: space-between;
    padding-right: 1px;
    margin-bottom: 18px;
    line-height: 19px;
    font-style: italic;
}

.job:has(+ .second) {
    margin-bottom: 0;
}

.role {
    font-family: Lato, sans-serif;
    font-size: 14px;
    font-weight: bold;
    color: #2f5597;
}

.firm {
    font-weight: bold;
}

.last {
    padding-right: 4px;
}

.caret {
    position: absolute;
    width: 1px;
    height: 18px;
    background: #000;
    transform: skewX(-12deg);
}

.skills {
    margin-right: -40px;
    font-family: Lato, sans-serif;
    font-size: 14px;
    line-height: 18px;
}

.side {
    width: 25px;
    flex: none;
    display: flex;
    flex-direction: column;
    gap: 17px;
    margin-left: -3px;
    overflow: hidden;
}

.corner {
    height: 22px;
    padding: 3px 4px;
    border: 1px solid #424242;
    background: #555;
}

.corner span {
    display: flex;
    align-items: flex-end;
    justify-content: flex-end;
    height: 14px;
    padding: 2px 3px;
    border: 1px solid #424242;
}

.corner i {
    width: 6px;
    height: 6px;
    border-right: 2px solid #fff;
    border-bottom: 2px solid #fff;
}

.vruler {
    margin-left: 6px;
}

/* status bar */
.status {
    display: flex;
    align-items: center;
    gap: 17px;
    height: 22px;
    padding: 0 12px 0 10px;
    border-top: 1px solid #424242;
    background: #666;
    color: #fff;
    font-size: 11px;
    white-space: nowrap;
}

.s-ico {
    width: 15px;
    height: 14px;
}

.track-ch {
    margin-right: 34px;
}

.access {
    display: flex;
    align-items: center;
    gap: 4px;
    margin-right: 3px;
    font-weight: bold;
}

.right-end {
    display: flex;
    align-items: center;
    gap: 7px;
    margin-right: auto;
}

.views {
    display: flex;
}

.views button {
    width: 40px;
    height: 21px;
    display: flex;
    align-items: center;
    justify-content: center;
}

.views .cur {
    background: #444;
}

.views svg {
    width: 14px;
    height: 13px;
}

.zoom {
    display: flex;
    align-items: center;
    gap: 6px;
}

.zoom label {
    width: 34px;
}

.zoom input {
    appearance: none;
    width: 100px;
    height: 12px;
    margin: 0;
    background: linear-gradient(#fff, #fff) no-repeat 0 5px / 100% 1px;
}

.zoom input::-webkit-slider-thumb {
    appearance: none;
    width: 5px;
    height: 11px;
    background: #fff;
}

/* taskbar */
.taskbar {
    display: grid;
    grid-template-columns: 1fr auto 1fr;
    align-items: center;
    height: 48px;
    border-top: 1px solid #b5b5b5;
    background: #dadada;
    color: #111;
}

.tray {
    display: flex;
    align-items: center;
    padding-left: 19px;
}

.clock {
    display: flex;
    flex-direction: column;
    align-items: flex-start;
    width: 80px;
    font-size: 12px;
    line-height: 16px;
}

.t-snd {
    width: 16px;
    height: 16px;
}

.t-wifi {
    width: 16px;
    height: 13px;
    margin-left: 6px;
}

.lang {
    width: 42px;
    margin-left: 18px;
}

.t-drive {
    width: 16px;
    height: 14px;
}

.t-up {
    width: 12px;
    height: 8px;
    margin-left: 18px;
}

.apps {
    grid-column: 2;
    display: flex;
    gap: 6px;
    padding-right: 2px;
}

.app {
    position: relative;
    width: 38px;
    height: 40px;
    display: flex;
    align-items: center;
    justify-content: center;
    border-radius: 4px;
}

.app svg {
    width: 24px;
    height: 24px;
}

.run::after {
    content: "";
    position: absolute;
    bottom: 1px;
    width: 6px;
    height: 3px;
    border-radius: 2px;
    background: #777;
}

.now {
    background: #efefef;
}

.now::after {
    width: 16px;
    background: #1473d0;
}

.badge {
    position: absolute;
    left: 3px;
    top: 2px;
    width: 16px;
    height: 16px;
    border-radius: 50%;
    color: #fff;
    font-size: 9px;
    line-height: 16px;
    text-align: center;
}

.badge.small {
    left: 20px;
    top: 8px;
    width: 12px;
    height: 12px;
    font-size: 7px;
    line-height: 12px;
}

.pink { background: #c2345d; }
.green { background: #178a63; }
.gray { background: #8f959e; }

.watermark {
    position: absolute;
    left: 845px;
    bottom: 16px;
    width: 232px;
    color: rgba(165, 165, 165, .35);
    font-family: "DejaVu Sans", sans-serif;
    font-size: 58px;
    font-weight: bold;
    line-height: 64px;
    text-align: center;
    pointer-events: none;
}
```
